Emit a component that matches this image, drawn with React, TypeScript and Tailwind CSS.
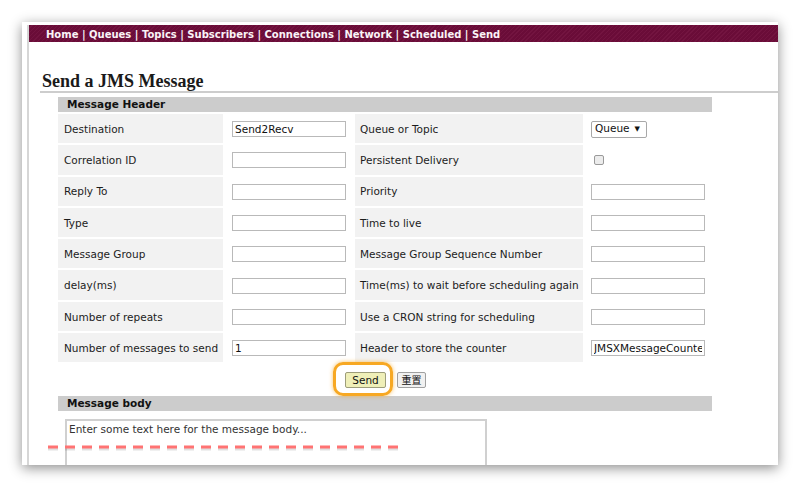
import React from "react";

function TextInput({ value = "" }: { value?: string }) {
  return (
    <input
      readOnly
      value={value}
      className="w-[114px] h-[16px] border border-[#b9b9b9] bg-white px-[2px] text-[10.5px] leading-[14px] text-[#111] outline-none [font-family:'DejaVu_Sans',sans-serif]"
    />
  );
}

function Label({ children, pl = "pl-[6px]" }: { children: React.ReactNode; pl?: string }) {
  return (
    <div className={`bg-[#f2f2f2] flex items-center pt-[2px] ${pl} text-[10.5px] text-[#1c1c1c] whitespace-nowrap`}>
      {children}
    </div>
  );
}

function Cell({ children, pl = "pl-[7px]" }: { children: React.ReactNode; pl?: string }) {
  return <div className={`bg-white flex items-center pt-[1px] ${pl}`}>{children}</div>;
}

export default function App() {
  const data: [string, React.ReactNode, string, React.ReactNode][] = [
    ["Destination", <TextInput value="Send2Recv" />, "Queue or Topic",
      <div className="w-[56px] h-[17px] border border-[#a8a8a8] rounded-[2px] bg-white flex items-center justify-between pl-[3px] pr-[6px] text-[10.5px] text-[#111]">
        <span>Queue</span>
        <span className="text-[7px] leading-none">▼</span>
      </div>],
    ["Correlation ID", <TextInput />, "Persistent Delivery",
      <div className="ml-[3px] w-[10px] h-[10px] border border-[#9a9a9a] rounded-[2px] bg-[#ececec]" />],
    ["Reply To", <TextInput />, "Priority", <TextInput />],
    ["Type", <TextInput />, "Time to live", <TextInput />],
    ["Message Group", <TextInput />, "Message Group Sequence Number", <TextInput />],
    ["delay(ms)", <TextInput />, "Time(ms) to wait before scheduling again", <TextInput />],
    ["Number of repeats", <TextInput />, "Use a CRON string for scheduling", <TextInput />],
    ["Number of messages to send", <TextInput value="1" />, "Header to store the counter", <TextInput value="JMSXMessageCounter" />],
  ];

  return (
    <div className="w-[800px] h-[487px] bg-white overflow-hidden pt-[22px] pl-[22px] [font-family:'DejaVu_Sans',sans-serif]">
      <div className="relative w-[756px] h-[443px] bg-white overflow-hidden shadow-[0_3px_12px_rgba(0,0,0,0.45)] pt-[3px] pl-[5px]">
        <div className="h-full border-l-2 border-[#d6d6d6]">
          {/* nav bar */}
          <div className="h-[17px] bg-[repeating-linear-gradient(135deg,#6a0c38_0px,#6a0c38_2px,#731440_2px,#731440_3px)] flex items-center pt-[1px] pl-[17px]">
            <span className="text-[10px] font-bold text-[#fbf3f7] whitespace-nowrap">
              Home | Queues | Topics | Subscribers | Connections | Network | Scheduled | Send
            </span>
          </div>

          {/* heading */}
          <div className="mt-[29px] ml-[11px] pl-[2px] border-b-2 border-[#cdcdcd]">
            <h1 className="text-[18px] leading-[20px] font-bold text-[#1a1a1a] [font-family:'Liberation_Serif',serif]">
              Send a JMS Message
            </h1>
          </div>

          {/* content */}
          <div className="ml-[29px] w-[654px] mt-[4px]">
            <div className="h-[15px] bg-[#cccccc] pl-[9px] text-[10.5px] font-bold leading-[15px] text-[#111]">
              Message Header
            </div>
            <div className="mt-[2px] grid grid-cols-[165px_128px_228px_127px] auto-rows-[29.3px] gap-x-[2px] gap-y-[2px]">
              {data.map(([l1, v1, l2, v2], i) => (
                <React.Fragment key={i}>
                  <Label>{l1}</Label>
                  <Cell>{v1}</Cell>
                  <Label pl="pl-[5px]">{l2}</Label>
                  <Cell pl="pl-[6px]">{v2}</Cell>
                </React.Fragment>
              ))}
            </div>

            {/* buttons */}
            <div className="mt-[10px] h-[16px] flex justify-center items-center gap-[11px] pl-[1px]">
              <div className="relative flex">
                <div className="absolute left-[-12px] top-[-10px] w-[60px] h-[34px] rounded-[10px] border-[3px] border-[#f7a823] shadow-[0_0_4px_rgba(247,168,35,0.7)]" />
                <button className="relative w-[41px] h-[16px] border border-[#9d9d7a] rounded-[2px] bg-[#efefb8] text-[10.5px] leading-[14px] text-[#111]">
                  Send
                </button>
              </div>
              <button className="w-[29px] h-[16px] border border-[#a0a0a0] rounded-[2px] bg-[#f1f1f1] text-[10px] leading-[14px] text-[#111] [font-family:'Noto_Sans_CJK_SC',sans-serif]">
                重置
              </button>
            </div>

            <div className="mt-[8px] h-[15px] bg-[#cccccc] pl-[9px] text-[10.5px] font-bold leading-[15px] text-[#111]">
              Message body
            </div>
            <div className="mt-[8px] ml-[7px] w-[422px] h-[80px] border-2 border-[#d0d0d0] bg-white px-[2px] pt-[1px] text-[10.5px] text-[#333]">
              Enter some text here for the message body...
            </div>
          </div>
        </div>

        {/* red dashed annotation */}
        <svg className="absolute left-[24px] top-[422px]" width="360" height="8" viewBox="0 0 360 8">
          <line x1="2" y1="3" x2="352" y2="3" stroke="rgba(0,0,0,0.12)" strokeWidth="3" strokeDasharray="10 7" transform="translate(0,2)" />
          <line x1="2" y1="3" x2="352" y2="3" stroke="#ff7373" strokeWidth="3" strokeDasharray="10 7" />
        </svg>
      </div>
    </div>
  );
}
